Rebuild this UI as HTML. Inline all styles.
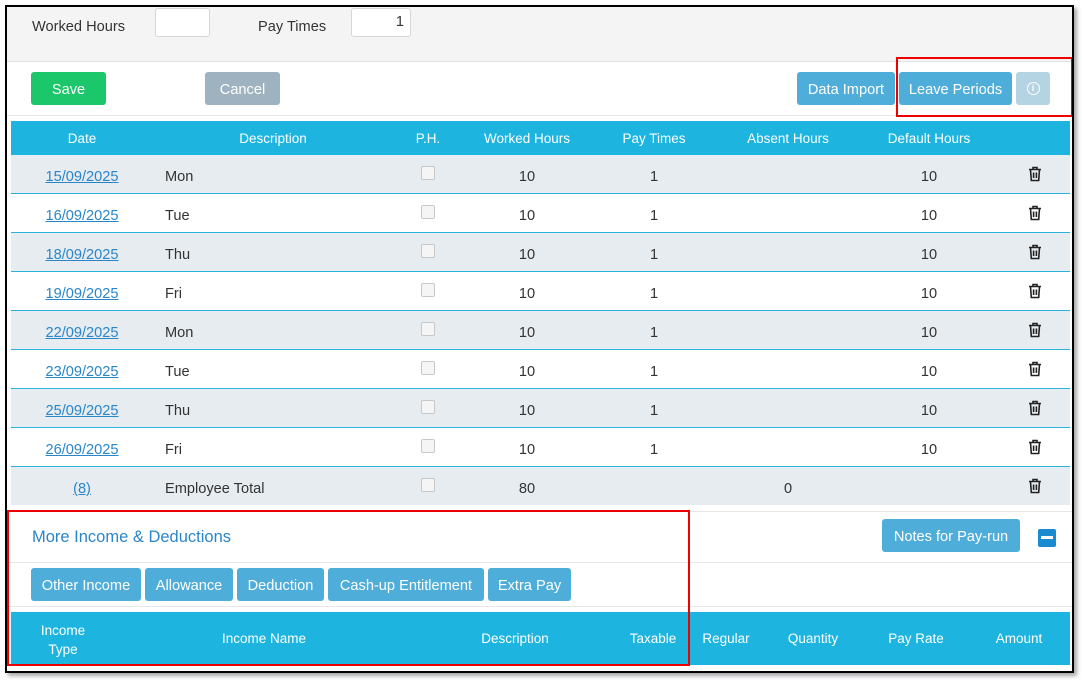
<!DOCTYPE html>
<html><head><meta charset="utf-8"><style>
*{box-sizing:border-box;margin:0;padding:0}
body{width:1083px;height:683px;background:#fff;font-family:"Liberation Sans",sans-serif;font-size:14.6px;color:#333;position:relative;overflow:hidden}
.frame{position:absolute;left:5px;top:5px;width:1069px;height:668px;border:2px solid #000;box-shadow:3px 3px 4px rgba(0,0,0,.35);background:#fff;overflow:hidden}
.abs{position:absolute}
.topbar{left:0;top:0;width:1067px;height:55px;background:#f4f4f4;border-bottom:1px solid #e3e3e3}
.lbl{font-size:14.6px;color:#333}
.inp{background:#fff;border:1px solid #d6d6d6;border-radius:3px;height:29px}
.btn{color:#fff;border-radius:3px;font-size:14.6px;height:33px;white-space:nowrap;display:flex;align-items:center;justify-content:center;padding-top:2px}
.hline{height:1px;background:#e6e6e6}
.thead{background:#1db5e0;color:#fff}
.h{font-size:13.5px;color:#fff}
.row{left:4px;width:1059px;height:39px;border-bottom:1px solid #2ab3de}
.c{position:absolute;text-align:center;transform:translateX(-50%);white-space:nowrap}
.lnk{color:#2a86c9;text-decoration:underline}
.cb{position:absolute;width:14px;height:14px;border:1px solid #c8c8c8;border-radius:2px;background:#f5f5f5}
.red{border:2px solid #e00;position:absolute}
</style></head><body>
<div class="frame">
<div class="abs topbar"></div>
<div class="abs lbl" style="left:25px;top:12px">Worked Hours</div>
<div class="abs inp" style="left:148px;top:1px;width:55px"></div>
<div class="abs lbl" style="left:251px;top:12px">Pay Times</div>
<div class="abs inp" style="left:344px;top:1px;width:60px;text-align:right;padding-right:6px;line-height:27px">1</div>

<div class="abs btn" style="left:24px;top:65px;width:75px;background:#1cc66a">Save</div>
<div class="abs btn" style="left:198px;top:65px;width:75px;background:#9fb2bf">Cancel</div>
<div class="abs btn" style="left:790px;top:65px;width:98px;background:#4fadd9">Data Import</div>
<div class="abs btn" style="left:892px;top:65px;width:113px;background:#4fadd9">Leave Periods</div>
<div class="abs btn" style="left:1009px;top:65px;width:34px;background:#b4d3e3;padding-top:0"><span style="display:inline-block;width:13px;height:13px;border:1.5px solid #fff;border-radius:50%;font-size:9px;line-height:10px;text-align:center;font-weight:bold">i</span></div>
<div class="abs hline" style="left:0;top:108px;width:1067px"></div>

<div class="abs thead" style="left:4px;top:114px;width:1059px;height:34px"></div>
<div class="c h" style="left:75px;top:124px">Date</div>
<div class="c h" style="left:266px;top:124px">Description</div>
<div class="c h" style="left:421px;top:124px">P.H.</div>
<div class="c h" style="left:520px;top:124px">Worked Hours</div>
<div class="c h" style="left:647px;top:124px">Pay Times</div>
<div class="c h" style="left:781px;top:124px">Absent Hours</div>
<div class="c h" style="left:922px;top:124px">Default Hours</div>

<div id="rows"></div>

<div class="abs hline" style="left:0;top:504px;width:1067px"></div>
<div class="abs" style="left:25px;top:521px;font-size:16.5px;color:#2a86c9">More Income &amp; Deductions</div>
<div class="abs btn" style="left:875px;top:512px;width:138px;background:#4fadd9">Notes for Pay-run</div>
<div class="abs" style="left:1031px;top:522px;width:18px;height:18px;background:#1a8bd0;border-radius:2px"><div style="position:absolute;left:3px;top:7px;width:12px;height:3px;background:#fff"></div></div>
<div class="abs hline" style="left:0;top:555px;width:1067px"></div>
<div class="abs btn" style="left:24px;top:561px;width:110px;background:#4fadd9">Other Income</div>
<div class="abs btn" style="left:138px;top:561px;width:88px;background:#4fadd9">Allowance</div>
<div class="abs btn" style="left:230px;top:561px;width:87px;background:#4fadd9">Deduction</div>
<div class="abs btn" style="left:321px;top:561px;width:156px;background:#4fadd9">Cash-up Entitlement</div>
<div class="abs btn" style="left:481px;top:561px;width:83px;background:#4fadd9">Extra Pay</div>
<div class="abs hline" style="left:0;top:599px;width:1067px"></div>
<div class="abs thead" style="left:4px;top:605px;width:1059px;height:53px"></div>
<div class="c h" style="left:56px;top:614px;line-height:19px">Income<br>Type</div>
<div class="c h" style="left:257px;top:624px">Income Name</div>
<div class="c h" style="left:508px;top:624px">Description</div>
<div class="c h" style="left:646px;top:624px">Taxable</div>
<div class="c h" style="left:719px;top:624px">Regular</div>
<div class="c h" style="left:806px;top:624px">Quantity</div>
<div class="c h" style="left:909px;top:624px">Pay Rate</div>
<div class="c h" style="left:1012px;top:624px">Amount</div>

<div class="red" style="left:889px;top:50px;width:177px;height:60px"></div>
<div class="red" style="left:0;top:503px;width:683px;height:156px"></div>
</div>
<script>
var d=[["15/09/2025","Mon"],["16/09/2025","Tue"],["18/09/2025","Thu"],["19/09/2025","Fri"],["22/09/2025","Mon"],["23/09/2025","Tue"],["25/09/2025","Thu"],["26/09/2025","Fri"],["(8)","Employee Total"]];
var trash='<svg width="14" height="16" viewBox="0 0 14 16" fill="none" stroke="#222" stroke-width="1.6"><path d="M1 3.5h12M5 3.5V1.5h4v2M2.5 3.5l.8 11h7.4l.8-11M5.6 6.5v5.5M8.4 6.5v5.5"/></svg>';
var h='';
d.forEach(function(r,i){var y=148+i*39;var bg=i%2==0?'#e7ecf0':'#fff';var last=i==8;
h+='<div class="abs row" style="top:'+y+'px;background:'+bg+(last?';border-bottom:none;height:38px':'')+'"></div>';
var ty=y+14;
h+='<div class="c lnk" style="left:75px;top:'+ty+'px">'+r[0]+'</div>';
h+='<div class="abs" style="left:158px;top:'+ty+'px">'+r[1]+'</div>';
h+='<div class="cb" style="left:414px;top:'+(y+11)+'px"></div>';
h+='<div class="c" style="left:520px;top:'+ty+'px">'+(last?'80':'10')+'</div>';
if(!last){h+='<div class="c" style="left:647px;top:'+ty+'px">1</div><div class="c" style="left:922px;top:'+ty+'px">10</div>';}
else h+='<div class="c" style="left:781px;top:'+ty+'px">0</div>';
h+='<div class="abs" style="left:1021px;top:'+(y+11)+'px">'+trash+'</div>';});
document.getElementById('rows').outerHTML=h;
</script>
</body></html>
